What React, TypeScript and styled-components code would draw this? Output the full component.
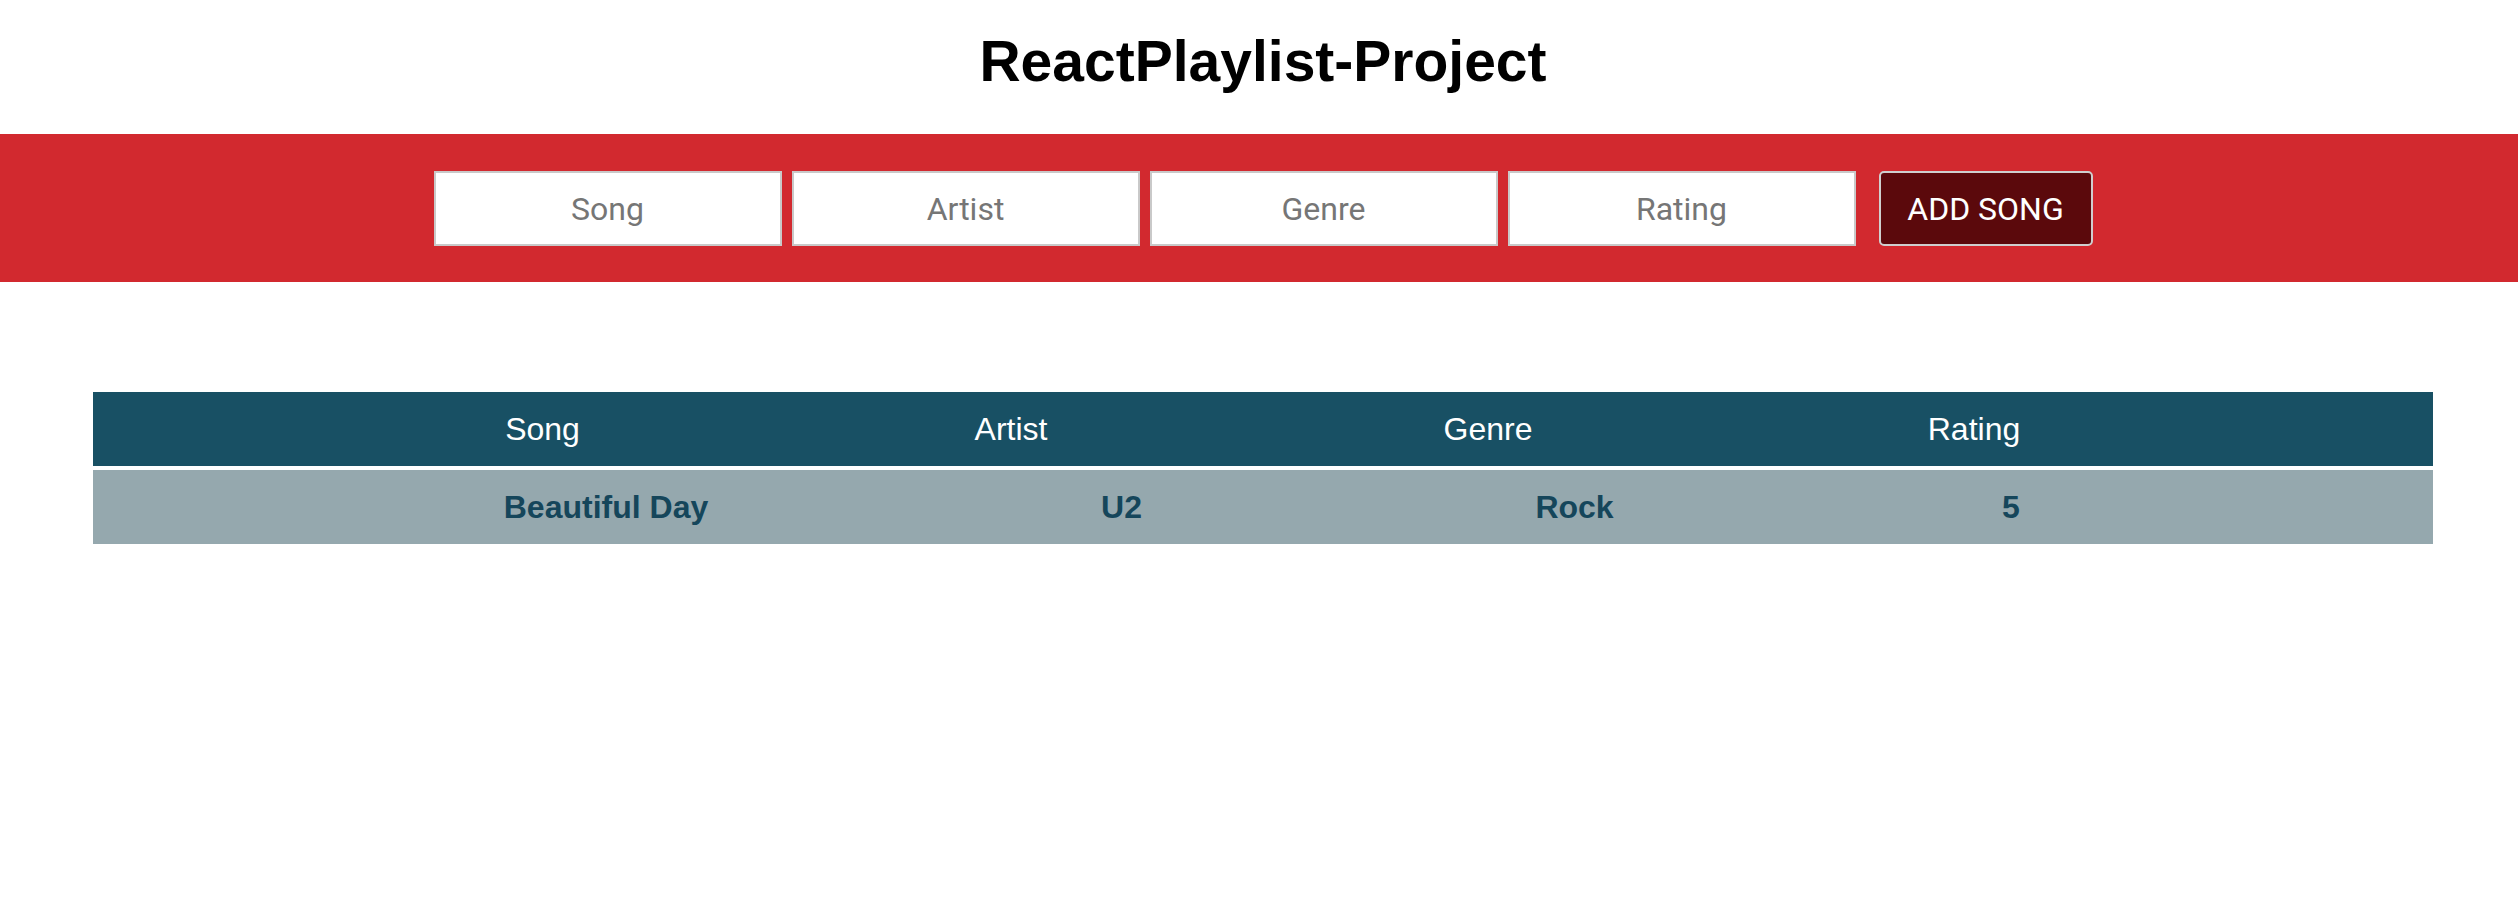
import React from "react";
import styled, { createGlobalStyle } from "styled-components";

const GlobalStyle = createGlobalStyle`
  html, body {
    margin: 0;
    padding: 0;
    background: #ffffff;
  }
  body {
    font-family: "Liberation Sans", Arial, sans-serif;
  }
  * { box-sizing: border-box; }
`;

const Page = styled.div`
  display: flex;
  flex-direction: column;
  min-height: 900px;
  background: #ffffff;
`;

const Title = styled.h1`
  margin: 28px 0 40px;
  padding-left: 8px;
  text-align: center;
  font-family: "Liberation Sans", Arial, sans-serif;
  font-weight: 700;
  font-size: 57px;
  line-height: 66px;
  color: #000000;
`;

const FormBar = styled.form`
  display: flex;
  justify-content: center;
  align-items: center;
  gap: 10px;
  padding: 37px 0 36px 8px;
  background: #d2292f;
`;

const Field = styled.input`
  width: 348px;
  height: 75px;
  margin: 0;
  padding: 0 8px;
  border: 2px solid #c9c9c9;
  border-radius: 0;
  background: #ffffff;
  text-align: center;
  font-family: Roboto, "Noto Sans", sans-serif;
  font-size: 32px;
  color: #222222;
  outline: none;
  &::placeholder {
    color: #767676;
    opacity: 1;
  }
`;

const AddButton = styled.button`
  width: 214px;
  height: 75px;
  margin-left: 13px;
  padding: 0;
  border: 2px solid #cfcfcf;
  border-radius: 5px;
  background: #5b090c;
  color: #ffffff;
  font-family: Roboto, "Noto Sans", sans-serif;
  font-size: 32px;
  cursor: pointer;
`;

const TableSection = styled.section`
  display: flex;
  justify-content: center;
  padding-left: 8px;
  margin-top: 110px;
`;

const Table = styled.div`
  width: 2340px;
  display: flex;
  flex-direction: column;
  gap: 4px;
`;

const Row = styled.div<{ $cols: string; $head?: boolean }>`
  display: grid;
  grid-template-columns: ${(p) => p.$cols};
  align-items: center;
  height: 74px;
  padding: 0 216px 0 215px;
  background: ${(p) => (p.$head ? "#185064" : "#95a8ae")};
  color: ${(p) => (p.$head ? "#ffffff" : "#15465b")};
  font-family: "Liberation Sans", Arial, sans-serif;
  font-size: 32px;
  font-weight: ${(p) => (p.$head ? 400 : 700)};
`;

const Cell = styled.div`
  text-align: center;
  white-space: nowrap;
`;

const HEAD_COLS = "469px 468px 486px 486px";
const BODY_COLS = "596px 435px 471px 402px";

const songs = [{ song: "Beautiful Day", artist: "U2", genre: "Rock", rating: "5" }];

export default function App() {
  return (
    <Page>
      <GlobalStyle />
      <Title>ReactPlaylist-Project</Title>
      <FormBar onSubmit={(e) => e.preventDefault()}>
        <Field placeholder="Song" />
        <Field placeholder="Artist" />
        <Field placeholder="Genre" />
        <Field placeholder="Rating" />
        <AddButton type="submit">ADD SONG</AddButton>
      </FormBar>
      <TableSection>
        <Table>
          <Row $cols={HEAD_COLS} $head>
            <Cell>Song</Cell>
            <Cell>Artist</Cell>
            <Cell>Genre</Cell>
            <Cell>Rating</Cell>
          </Row>
          {songs.map((s) => (
            <Row key={s.song} $cols={BODY_COLS}>
              <Cell>{s.song}</Cell>
              <Cell>{s.artist}</Cell>
              <Cell>{s.genre}</Cell>
              <Cell>{s.rating}</Cell>
            </Row>
          ))}
        </Table>
      </TableSection>
    </Page>
  );
}
